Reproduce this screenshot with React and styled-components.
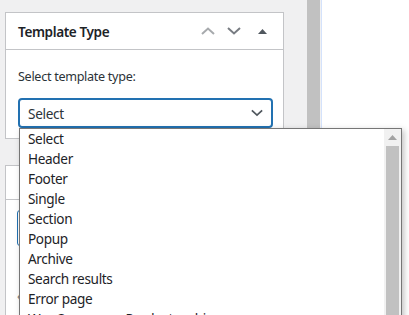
import styled, { createGlobalStyle } from "styled-components";

const GlobalStyle = createGlobalStyle`
  html, body {
    margin: 0;
    padding: 0;
    background: #f0f0f1;
    font-family: "Noto Sans", "Open Sans", sans-serif;
    color: #1d2327;
  }
`;

const options = [
  "Select",
  "Header",
  "Footer",
  "Single",
  "Section",
  "Popup",
  "Archive",
  "Search results",
  "Error page",
  "WooCommerce Product archive",
  "WooCommerce Single product",
];

function ChevronUp() {
  return (
    <svg width="14" height="8" viewBox="0 0 14 8">
      <path d="M1 7 L7 1.5 L13 7" fill="none" stroke="#a7aaad" strokeWidth="2" />
    </svg>
  );
}

function ChevronDown({ color = "#787c82", width = 14 }) {
  return (
    <svg width={width} height="8" viewBox="0 0 14 8">
      <path d="M1 1 L7 6.5 L13 1" fill="none" stroke={color} strokeWidth="2" />
    </svg>
  );
}

function Triangle() {
  return (
    <svg width="9" height="5" viewBox="0 0 9 5">
      <path d="M0 5 L4.5 0 L9 5 Z" fill="#50575e" />
    </svg>
  );
}

function App() {
  return (
    <>
      <GlobalStyle />
      <Screen>
        <Sidebar>
          <Panel>
            <PanelHeader>
              <PanelTitle>Template Type</PanelTitle>
              <HeaderActions>
                <IconButton $w={26}>
                  <ChevronUp />
                </IconButton>
                <IconButton $w={26}>
                  <ChevronDown />
                </IconButton>
                <IconButton $w={30}>
                  <Triangle />
                </IconButton>
              </HeaderActions>
            </PanelHeader>
            <PanelBody>
              <FieldLabel>Select template type:</FieldLabel>
              <SelectWrap>
                <SelectBox>
                  <span>Select</span>
                  <ChevronDown color="#50575e" width={12} />
                </SelectBox>
                <Dropdown>
                  <OptionList>
                    {options.map((o) => (
                      <Option key={o}>{o}</Option>
                    ))}
                  </OptionList>
                  <ScrollTrack>
                    <ScrollArrow>
                      <svg width="9" height="5" viewBox="0 0 9 5">
                        <path d="M0 5 L4.5 0 L9 5 Z" fill="#a3a3a3" />
                      </svg>
                    </ScrollArrow>
                    <ScrollThumb />
                  </ScrollTrack>
                </Dropdown>
              </SelectWrap>
            </PanelBody>
          </Panel>
          <Panel $gap>
            <PanelHeader $h={33} />
            <PanelBody $pad="10px 0 0 11px">
              <OutlineButton />
              <Quote>«</Quote>
            </PanelBody>
          </Panel>
        </Sidebar>
        <SideScroll />
        <Canvas />
      </Screen>
    </>
  );
}

export default App;

const Screen = styled.div`
  display: flex;
  width: 409px;
  height: 315px;
  overflow: hidden;
`;

const Sidebar = styled.div`
  width: 307px;
  flex-shrink: 0;
  padding: 12px 23px 0 5px;
  box-sizing: border-box;
  background: #f0f0f1;
`;

const SideScroll = styled.div`
  width: 13px;
  flex-shrink: 0;
  background: #c1c1c1;
  border-right: 1px solid #f0f0f1;
`;

const Canvas = styled.div`
  flex: 1;
  background: #fff;
  border-left: 1px solid #d4e2fb;
`;

const Panel = styled.section`
  position: relative;
  background: #fff;
  border: 1px solid #c3c4c7;
  margin-top: ${(p) => (p.$gap ? "26px" : "0")};
  height: ${(p) => (p.$gap ? "160px" : "auto")};
`;

const PanelHeader = styled.div`
  display: flex;
  align-items: center;
  justify-content: space-between;
  height: ${(p) => p.$h || 36}px;
  padding: 0 6px 0 12px;
  border-bottom: 1px solid #c3c4c7;
`;

const PanelTitle = styled.h2`
  margin: 0;
  font-size: 13.6px;
  font-weight: 600;
  color: #1d2327;
  letter-spacing: -0.4px;
`;

const HeaderActions = styled.div`
  display: flex;
  align-items: center;
`;

const IconButton = styled.span`
  display: flex;
  align-items: center;
  justify-content: center;
  width: ${(p) => p.$w}px;
  height: 36px;
`;

const PanelBody = styled.div`
  padding: ${(p) => p.$pad || "17px 10px 10px 12px"};
`;

const FieldLabel = styled.div`
  font-size: 12.6px;
  line-height: 20px;
  color: #2c3338;
  margin-bottom: 11px;
  letter-spacing: -0.3px;
`;

const SelectWrap = styled.div`
  position: relative;
`;

const SelectBox = styled.div`
  display: flex;
  align-items: center;
  justify-content: space-between;
  height: 30px;
  width: 255px;
  box-sizing: border-box;
  padding: 0 8px 0 8px;
  border: 2px solid #2271b1;
  border-radius: 4px;
  font-size: 13.6px;
  letter-spacing: -0.3px;
  color: #2c3338;
`;

const Dropdown = styled.div`
  position: absolute;
  top: 30px;
  left: 1px;
  width: 383px;
  height: 200px;
  display: flex;
  background: #fff;
  border: 1px solid #767676;
  box-sizing: border-box;
  box-shadow: 2px 2px 6px rgba(0, 0, 0, 0.25);
  z-index: 2;
`;

const OptionList = styled.ul`
  flex: 1;
  margin: 0;
  padding: 0;
  list-style: none;
`;

const Option = styled.li`
  height: 20px;
  line-height: 20px;
  padding-left: 8px;
  font-size: 13.6px;
  color: #1d2327;
  letter-spacing: -0.35px;
  white-space: nowrap;
`;

const ScrollTrack = styled.div`
  width: 17px;
  display: flex;
  flex-direction: column;
  align-items: center;
  background: #f1f1f1;
`;

const ScrollArrow = styled.div`
  height: 17px;
  display: flex;
  align-items: center;
  justify-content: center;
`;

const ScrollThumb = styled.div`
  flex: 1;
  width: 13px;
  background: #c1c1c1;
`;

const OutlineButton = styled.div`
  width: 40px;
  height: 34px;
  border: 1px solid #2271b1;
  border-radius: 3px;
`;

const Quote = styled.div`
  margin-top: 40px;
  font-size: 14px;
  color: #787c82;
`;
